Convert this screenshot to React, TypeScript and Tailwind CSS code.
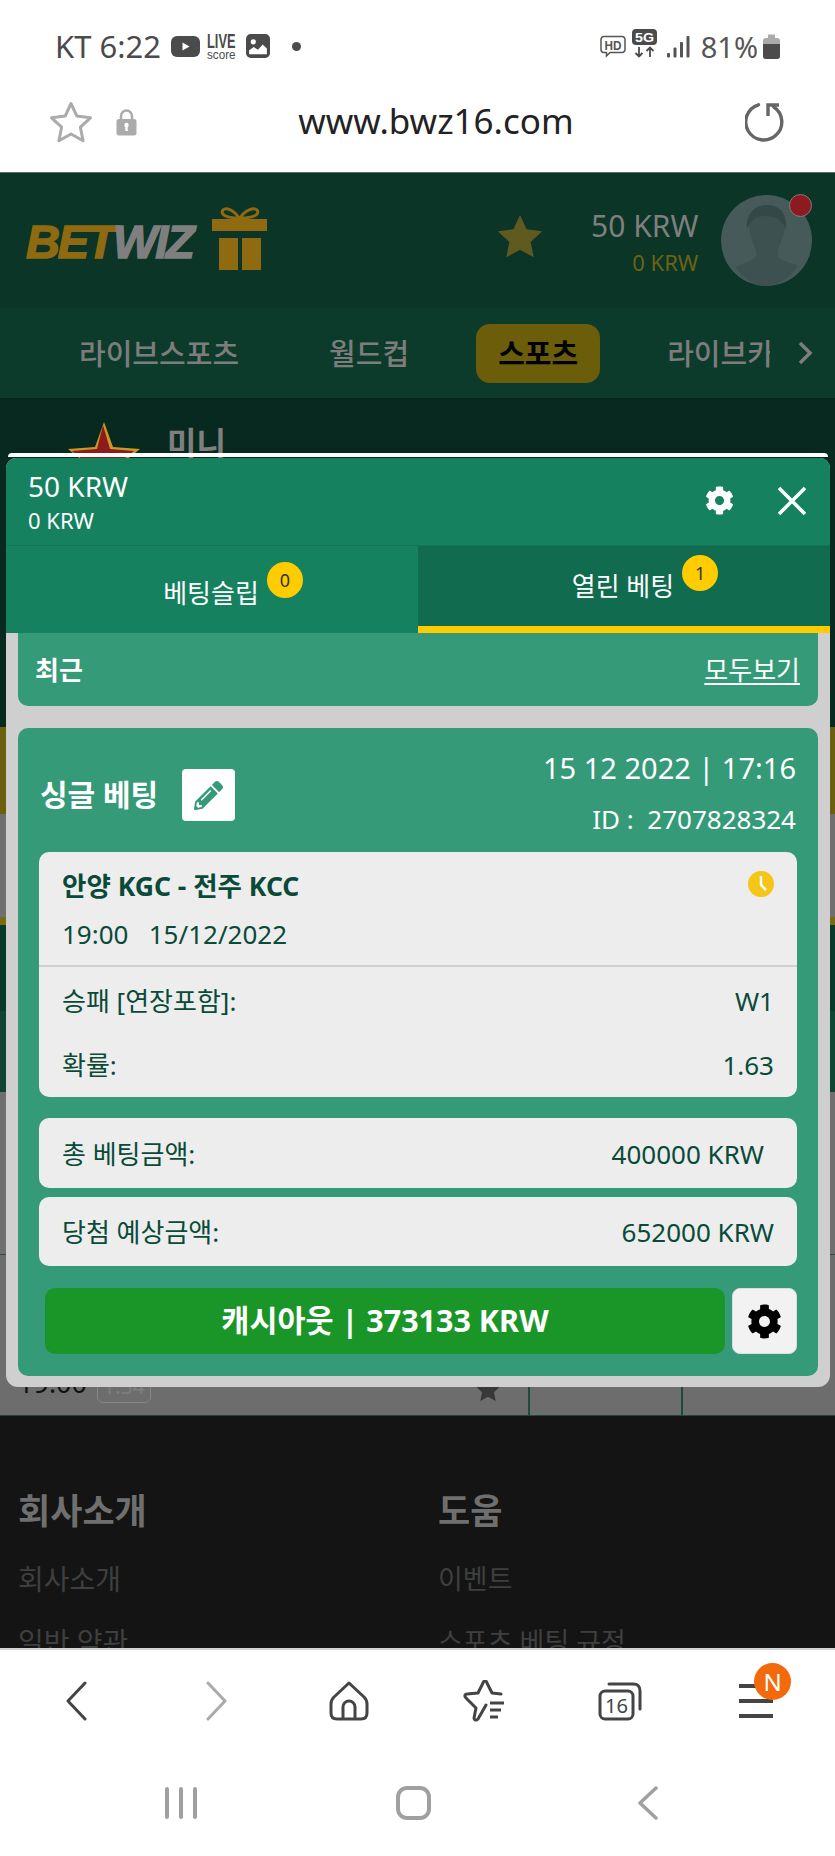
import React from "react";
import { FaCog, FaPencilAlt } from "react-icons/fa";

function Star({ className = "", fill = "none", stroke = "none", sw = 0 }: { className?: string; fill?: string; stroke?: string; sw?: number }) {
  return (
    <svg viewBox="0 0 44 42" className={className}>
      <path d="M22 2.5l5.8 12.6 13.7 1.7-10.1 9.4 2.7 13.6L22 33l-12.100 6.800 2.700-13.600L2.500 16.800l13.700-1.700z" fill={fill} stroke={stroke} strokeWidth={sw} strokeLinejoin="round" />
    </svg>
  );
}

function StatusIcons() {
  return (
    <div className="flex items-center">
      <svg width="29" height="21" viewBox="0 0 29 21" className="ml-[10px]">
        <rect width="29" height="21" rx="6" fill="#4b4b4b" />
        <path d="M11.500 6.500l7 4-7 4z" fill="#fff" />
      </svg>
      <svg width="29" height="27" viewBox="0 0 29 27" className="ml-[7px]">
        <text x="0" y="15" fontFamily="'Liberation Sans'" fontWeight="700" fontSize="20" textLength="28.500" lengthAdjust="spacingAndGlyphs" fill="#4b4b4b">LIVE</text>
        <text x="0" y="26" fontFamily="'Liberation Sans'" fontSize="13" textLength="28.500" lengthAdjust="spacingAndGlyphs" fill="#4b4b4b">score</text>
      </svg>
      <svg width="24" height="24" viewBox="0 0 23 23" className="ml-[10px]">
        <rect x="1" y="1" width="21" height="21" rx="3.500" fill="#4b4b4b" stroke="#4b4b4b" strokeWidth="2" />
        <circle cx="7" cy="7.500" r="2.500" fill="#fff" />
        <path d="M3 19.500v-4l4.500-3 4 2.500 4.500-5 4 4v5.500z" fill="#fff" />
      </svg>
      <div className="ml-[22px] h-[9px] w-[9px] rounded-full bg-[#4b4b4b]" />
    </div>
  );
}

function StatusRight() {
  return (
    <div className="flex items-center">
      <svg width="26" height="23" viewBox="0 0 26 23">
        <path d="M4 1.500h18a3 3 0 0 1 3 3v10a3 3 0 0 1-3 3H10l-3.500 3.500v-3.500H4a3 3 0 0 1-3-3v-10a3 3 0 0 1 3-3z" fill="none" stroke="#555" strokeWidth="1.500" />
        <text x="4.500" y="14.500" fontFamily="'Liberation Sans'" fontWeight="700" fontSize="12.500" textLength="17" lengthAdjust="spacingAndGlyphs" fill="#555">HD</text>
      </svg>
      <svg width="26" height="29" viewBox="0 0 26 29" className="ml-[6px] -mt-[5px]">
        <rect width="25" height="16" rx="4" fill="#4b4b4b" />
        <text x="3" y="13" fontFamily="'Liberation Sans'" fontWeight="700" fontSize="13" textLength="19" lengthAdjust="spacingAndGlyphs" fill="#fff">5G</text>
        <path d="M7 18v9M3.500 24l3.500 3.500 3.500-3.500M18 28v-9M14.500 22l3.500-3.500 3.500 3.500" fill="none" stroke="#4b4b4b" strokeWidth="1.800" />
      </svg>
      <svg width="23" height="23" viewBox="0 0 23 23" className="ml-[9px]">
        <rect x="0" y="18" width="3" height="4.500" rx="1" fill="#555" />
        <rect x="6.500" y="12.500" width="3" height="10" rx="1" fill="#555" />
        <rect x="13" y="7" width="3" height="15.500" rx="1" fill="#555" />
        <rect x="19.500" y="1" width="3" height="21.500" rx="1" fill="#555" />
      </svg>
      <span className="ml-[11px] text-[29px] leading-none text-[#555]">81%</span>
      <svg width="17" height="25" viewBox="0 0 17 25" className="ml-[5px]">
        <path d="M5 0.500h7v3.500h2a3 3 0 0 1 3 3v15a3 3 0 0 1-3 3H3a3 3 0 0 1-3-3V7a3 3 0 0 1 3-3h2z" fill="#aaa" />
        <path d="M0 10h17v12a3 3 0 0 1-3 3H3a3 3 0 0 1-3-3z" fill="#4b4b4b" />
      </svg>
    </div>
  );
}

function TopChrome() {
  return (
    <div className="h-[172px] bg-white">
      <div className="flex h-[92px] items-center justify-between pl-[55px] pr-[55px]">
        <div className="flex items-center">
          <span className="text-[31px] leading-none text-[#4b4b4b]">KT 6:22</span>
          <StatusIcons />
        </div>
        <StatusRight />
      </div>
      <div className="flex h-[60px] items-center pl-[49px] pr-[50px]">
        <Star className="h-[42px] w-[44px]" stroke="#ababab" sw={3} />
        <svg width="21" height="28" viewBox="0 0 21 28" className="ml-[23px]">
          <path d="M5 12V8a5.500 5.500 0 0 1 11 0v4" fill="none" stroke="#ababab" strokeWidth="2.500" />
          <rect x="0.500" y="11" width="20" height="16.500" rx="2.500" fill="#ababab" />
          <rect x="9.300" y="17" width="2.400" height="6" fill="#fff" />
          <circle cx="10.500" cy="17" r="2.200" fill="#fff" />
        </svg>
        <div className="-mt-[3px] flex-1 pr-[10px] text-center text-[35px] leading-none text-[#222]">www.bwz16.com</div>
        <svg width="40" height="40" viewBox="0 0 40 40">
          <path d="M25.500 3.500A18 18 0 1 1 10 4.500" transform="rotate(12 20 20)" fill="none" stroke="#666" strokeWidth="3.400" strokeLinecap="round" />
          <path d="M23 14V3h11" fill="none" stroke="#666" strokeWidth="3.400" />
        </svg>
      </div>
    </div>
  );
}

function SiteHeader() {
  return (
    <div className="flex h-[136px] items-start border-t border-t-[#56706a] bg-[#0a3527] pl-[26px]">
      <div className="mt-[44px] font-['Liberation_Sans',sans-serif] text-[47px] font-bold italic leading-[50px] tracking-[-2.300px] [-webkit-text-stroke:1.500px_currentColor]">
        <span className="text-[#8f6a10]">BET</span>
        <span className="text-[#7f7f7f]">WIZ</span>
      </div>
      <svg width="56" height="64" viewBox="0 0 56 64" className="ml-[20px] mt-[34px]">
        <path d="M27 11C22 3 14 0 11 3c-3 4 2 8 16 8zM28 11C33 3 42 0 45 3c3 4-2 8-17 8z" fill="none" stroke="#8f6a10" strokeWidth="3" />
        <rect x="0" y="12" width="55" height="12" fill="#8f6a10" />
        <rect x="7" y="31" width="19" height="32" fill="#8f6a10" />
        <rect x="30" y="31" width="19" height="32" fill="#8f6a10" />
      </svg>
      <Star className="ml-[227px] mt-[38px] h-[50px] w-[50px]" fill="#5f5a1f" />
      <div className="ml-[39px] mt-[34px] w-[114px] text-right">
        <div className="text-[30px] leading-[38px] text-[#7f7f7f]">50 KRW</div>
        <div className="mt-[2px] text-[22px] leading-[30px] text-[#6b6413]">0 KRW</div>
      </div>
      <div className="relative ml-[23px] mt-[22px] h-[91px] w-[91px]">
        <svg viewBox="0 0 91 91" className="h-full w-full">
          <circle cx="45.500" cy="45.500" r="45.500" fill="#465a5a" />
          <path d="M28 32c-2-14 8-22 18-22s20 6 18 22c-1 10-5 17-7 23-1 5 0 8 4 10l16 6c-8 12-20 20-32 20S22 83 14 72l17-7c4-2 5-5 4-9-2-7-6-13-7-24z" fill="#3d5151" />
          <path d="M26 34c-2-15 8-24 20-24s21 9 19 24c-5-9-7-12-19-13-12 0-15 4-20 13z" fill="#354848" />
        </svg>
        <div className="absolute -right-[0px] -top-[1px] h-[23px] w-[23px] rounded-full border border-[#7d7d7d] bg-[#8c1a20]" />
      </div>
    </div>
  );
}

function NavBar() {
  return (
    <div className="flex h-[90px] items-center bg-[#0d3b2b] pl-[56px] pr-[22px]">
      <div className="flex h-full flex-1 items-center gap-[44px] overflow-hidden text-[29px] font-medium leading-none text-[#7d7d7d]">
        <span className="shrink-0 px-[23px]">라이브스포츠</span>
        <span className="shrink-0 px-[23px]">월드컵</span>
        <span className="shrink-0 rounded-[14px] bg-[#6b5d0a] px-[22px] py-[15px] font-bold text-black">스포츠</span>
        <span className="shrink-0 px-[23px]">라이브카지노</span>
      </div>
      <svg width="15" height="24" viewBox="0 0 15 24" className="ml-[28px]">
        <path d="M2 2l10 10L2 22" fill="none" stroke="#7d7d7d" strokeWidth="3.500" />
      </svg>
    </div>
  );
}

function PageBands() {
  return (
    <div className="flex flex-col">
      <div className="flex h-[329px] items-start bg-[#07291f] pl-[68px] pt-[24px]">
        <svg width="72" height="70" viewBox="0 0 72 70">
          <path d="M36 0l9 25 27 2-20 16 7 26-23-14-23 14 7-26L0 27l27-2z" fill="#c89a25" />
          <path d="M35 3l7 24 24 2-18 14 6 22-19-13-20 13 6-22L4 29l25-2z" fill="#8f1a1c" />
        </svg>
        <span className="ml-[27px] mt-[1px] text-[32px] font-bold leading-[40px] text-[#7f7f7f]">미니</span>
      </div>
      <div className="h-[87px] bg-[#6b6010]" />
      <div className="h-[103px] bg-[#6f6f6f]" />
      <div className="h-[8px] bg-[#7a6a10]" />
      <div className="h-[86px] bg-[#08392a]" />
      <div className="h-[81px] bg-[#0f4533]" />
      <div className="h-[163px] border-b border-b-[#2c4f43] bg-[#6f6f6f]" />
      <div className="flex h-[161px] items-end border-b border-b-[#1f4a3c] bg-[#6d6d6d] pl-[18px]">
        <div className="mb-[12px] flex w-[456px] items-center">
          <span className="text-[27px] leading-[40px] text-[#111]">19:00</span>
          <span className="ml-[10px] mt-[6px] rounded-[6px] border border-[#85858f] px-[5px] text-[21px] leading-[32px] text-[#7d7d7d]">1.34</span>
        </div>
        <Star className="mb-[12px] h-[28px] w-[28px]" fill="#383838" />
        <div className="ml-[26px] h-full w-[2px] bg-[#1f4a3c]" />
        <div className="ml-[151px] h-full w-[2px] bg-[#1f4a3c]" />
      </div>
    </div>
  );
}

function Footer() {
  return (
    <div className="flex h-[232px] overflow-hidden bg-[#141414] pl-[18px] pt-[75px]">
      <div className="w-[420px]">
        <div className="text-[35px] font-bold leading-[40px] text-[#6f6f6f]">회사소개</div>
        <div className="mt-[28px] text-[28px] leading-[40px] text-[#3f3f3f]">회사소개</div>
        <div className="mt-[23px] text-[28px] leading-[40px] text-[#3f3f3f]">일반 약관</div>
      </div>
      <div>
        <div className="text-[35px] font-bold leading-[40px] text-[#6f6f6f]">도움</div>
        <div className="mt-[28px] text-[27px] leading-[40px] text-[#3f3f3f]">이벤트</div>
        <div className="mt-[23px] text-[27px] leading-[40px] text-[#3f3f3f]">스포츠 베팅 규정</div>
      </div>
    </div>
  );
}

function BottomChrome() {
  return (
    <div className="h-[208px] border-t-2 border-t-[#d4d4d4] bg-white">
      <div className="flex h-[96px] items-center pl-[65px] pt-[6px]">
        <svg width="22" height="40" viewBox="0 0 22 40">
          <path d="M20 2L3 20l17 18" fill="none" stroke="#444" strokeWidth="3" strokeLinecap="round" strokeLinejoin="round" />
        </svg>
        <svg width="22" height="40" viewBox="0 0 22 40" className="ml-[119px]">
          <path d="M2 2l17 18L2 38" fill="none" stroke="#aaa" strokeWidth="3" strokeLinecap="round" strokeLinejoin="round" />
        </svg>
        <svg width="40" height="40" viewBox="0 0 40 40" className="ml-[101px]">
          <path d="M20 2L35 16c2 2 3 4 3 7v9c0 4-2 6-6 6H8c-4 0-6-2-6-6v-9c0-3 1-5 3-7z" fill="none" stroke="#444" strokeWidth="3" strokeLinejoin="round" />
          <path d="M14 38V26a6 6 0 0 1 12 0v12" fill="none" stroke="#444" strokeWidth="3" />
        </svg>
        <svg width="42" height="42" viewBox="0 0 42 42" className="ml-[94px]">
          <path d="M23 25l-8 14c-2 2-4 1-4-1l2-10L3 18c-2-2-1-4 1-4l11-1 5-10c1-3 3-3 4 0l5 10 9 1" fill="none" stroke="#444" strokeWidth="3" strokeLinejoin="round" strokeLinecap="round" />
          <path d="M27 23h14M27 30h11M27 37h8" stroke="#444" strokeWidth="3.200" />
        </svg>
        <svg width="44" height="40" viewBox="0 0 44 40" className="ml-[93px]">
          <rect x="2" y="10" width="33" height="28" rx="5" fill="none" stroke="#444" strokeWidth="3" />
          <path d="M11 3h24c5 0 7 2 7 7v18" fill="none" stroke="#444" strokeWidth="3" strokeLinecap="round" />
          <text x="7" y="32" fontFamily="'Noto Sans'" fontSize="20" textLength="23" lengthAdjust="spacingAndGlyphs" fill="#444">16</text>
        </svg>
        <div className="relative ml-[97px] flex h-[34px] w-[34px] flex-col justify-between">
          <div className="h-[4px] bg-[#444]" />
          <div className="h-[4px] bg-[#444]" />
          <div className="h-[4px] bg-[#444]" />
          <div className="absolute -right-[18px] -top-[21px] flex h-[37px] w-[37px] items-center justify-center rounded-full bg-[#f26a0c] text-[24px] leading-none text-white">N</div>
        </div>
      </div>
      <div className="flex h-[80px] items-center pl-[165px] pt-[34px]">
        <div className="flex h-[32px] w-[32px] justify-between">
          <div className="w-[4px] rounded bg-[#a0a0a0]" />
          <div className="w-[4px] rounded bg-[#a0a0a0]" />
          <div className="w-[4px] rounded bg-[#a0a0a0]" />
        </div>
        <div className="ml-[199px] h-[34px] w-[35px] rounded-[11px] border-[4px] border-[#a0a0a0]" />
        <svg width="22" height="34" viewBox="0 0 22 34" className="ml-[206px]">
          <path d="M19 2L3 17l16 15" fill="none" stroke="#a0a0a0" strokeWidth="3.500" strokeLinecap="round" strokeLinejoin="round" />
        </svg>
      </div>
    </div>
  );
}

function BetSlip() {
  return (
    <div className="absolute left-[6px] top-[453px] w-[824px]">
      <div className="mx-[2px] h-[4px] rounded-t-[4px] bg-white" />
      <div className="mt-[1px] overflow-hidden rounded-b-[12px] rounded-t-[10px] bg-[#cfcfcf] pb-[11px]">
        <div className="flex h-[87px] items-center justify-between bg-[#15815f] pl-[22px] pr-[23px] text-white">
          <div className="-mt-[2px]">
            <div className="text-[28px] leading-[38px]">50 KRW</div>
            <div className="text-[22px] leading-[30px]">0 KRW</div>
          </div>
          <div className="flex items-center">
            <FaCog className="-mt-[2px] -mr-[1px] h-[29px] w-[29px]" />
            <svg width="30" height="30" viewBox="0 0 30 30" className="ml-[44px] -mt-[2px]">
              <path d="M2 2l26 26M28 2L2 28" stroke="#fff" strokeWidth="3.500" />
            </svg>
          </div>
        </div>
        <div className="flex h-[88px] border-t border-t-[#127355] text-[26px] text-white">
          <div className="flex w-[412px] items-center justify-center bg-[#15815f] pl-[42px]">
            <span className="mt-[7px] leading-[40px]">베팅슬립</span>
            <span className="mb-[20px] ml-[8px] flex h-[36px] w-[36px] items-center justify-center rounded-full bg-[#ffcc00] text-[18px] leading-none text-[#333]">0</span>
          </div>
          <div className="flex w-[412px] items-center justify-center border-b-[7px] border-b-[#ffcc00] bg-[#116b4f] pl-[42px]">
            <span className="leading-[40px]">열린 베팅</span>
            <span className="mb-[27px] ml-[8px] flex h-[36px] w-[36px] items-center justify-center rounded-full bg-[#ffcc00] text-[18px] leading-none text-[#333]">1</span>
          </div>
        </div>
        <div className="px-[12px]">
          <div className="flex h-[73px] items-center justify-between rounded-b-[10px] bg-[#359a78] pl-[17px] pr-[18px] text-[26px] text-white">
            <span className="font-bold leading-[40px]">최근</span>
            <span className="leading-[40px] underline underline-offset-[3px]">모두보기</span>
          </div>
          <div className="mt-[22px] rounded-[10px] bg-[#359a78] px-[21px] pb-[22px]">
            <div className="flex h-[124px] items-start justify-between text-white">
              <div className="ml-[1px] mt-[41px] flex items-center">
                <span className="text-[30px] font-bold leading-[40px]">싱글 베팅</span>
                <div className="ml-[24px] flex h-[52px] w-[53px] items-center justify-center rounded-[4px] bg-white">
                  <FaPencilAlt className="h-[29px] w-[29px] text-[#359a78]" />
                </div>
              </div>
              <div className="pr-[1px] pt-[21px] text-right">
                <div className="text-[29px] leading-[38px]">15 12 2022 | 17:16</div>
                <div className="mt-[13px] text-[26px] leading-[38px]">ID :&nbsp;&nbsp;2707828324</div>
              </div>
            </div>
            <div className="rounded-[10px] bg-[#ededed] text-[26px] text-[#0a4a38]">
              <div className="h-[115px] border-b-2 border-b-[#cfcfcf] px-[23px] pt-[15px]">
                <div className="flex h-[38px] items-center justify-between">
                  <span className="text-[26.500px] font-bold leading-[38px]">안양 KGC - 전주 KCC</span>
                  <svg width="26" height="26" viewBox="0 0 26 26" className="-mt-[4px]">
                    <circle cx="13" cy="13" r="13" fill="#f5c518" />
                    <path d="M13 5v9l5 5" fill="none" stroke="#fff" strokeWidth="2.500" />
                  </svg>
                </div>
                <div className="mt-[10px] leading-[38px]">19:00&nbsp;&nbsp; 15/12/2022</div>
              </div>
              <div className="px-[23px] pt-[2px]">
                <div className="flex h-[64px] items-center justify-between">
                  <span>승패 [연장포함]:</span>
                  <span>W1</span>
                </div>
                <div className="flex h-[64px] items-center justify-between">
                  <span>확률:</span>
                  <span>1.63</span>
                </div>
              </div>
            </div>
            <div className="mt-[21px] flex h-[70px] items-center justify-between rounded-[10px] bg-[#ededed] pl-[23px] pr-[33px] text-[26px] text-[#0a4a38]">
              <span className="mt-[2px]">총 베팅금액:</span>
              <span className="mt-[2px]">400000 KRW</span>
            </div>
            <div className="mt-[9px] flex h-[69px] items-center justify-between rounded-[10px] bg-[#ededed] px-[23px] text-[26px] text-[#0a4a38]">
              <span className="mt-[2px]">당첨 예상금액:</span>
              <span className="mt-[2px]">652000 KRW</span>
            </div>
            <div className="mt-[22px] flex h-[66px] pl-[6px]">
              <div className="flex w-[680px] items-center justify-center rounded-[10px] bg-[#1a9528] text-[30.500px] font-bold text-white">캐시아웃 | 373133 KRW</div>
              <div className="ml-[7px] flex w-[65px] items-center justify-center rounded-[8px] border border-[#dcdcdc] bg-[#f2f2f2]">
                <FaCog className="h-[35px] w-[35px] text-black" />
              </div>
            </div>
          </div>
        </div>
      </div>
    </div>
  );
}

export default function App() {
  return (
    <div className="relative h-[1856px] w-[835px] overflow-hidden bg-white font-['Noto_Sans','Noto_Sans_CJK_KR',sans-serif]">
      <TopChrome />
      <SiteHeader />
      <NavBar />
      <PageBands />
      <Footer />
      <BottomChrome />
      <BetSlip />
    </div>
  );
}
